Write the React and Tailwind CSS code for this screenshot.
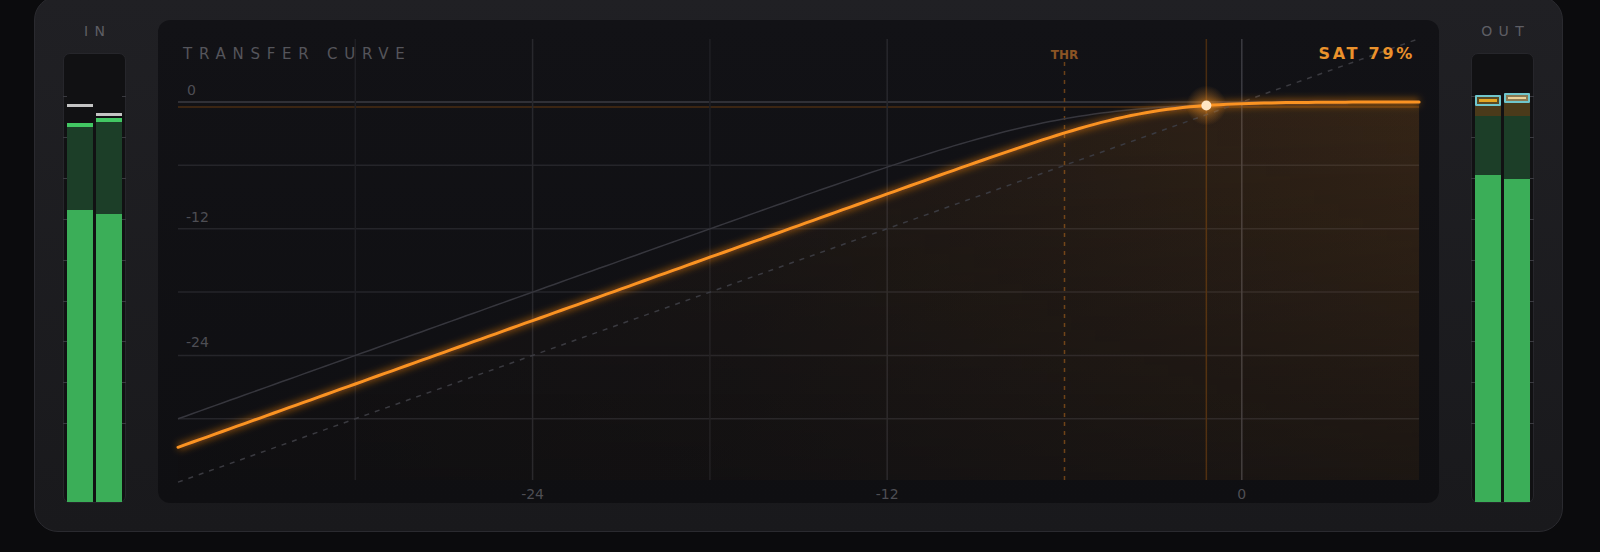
import React from "react";

// plot mapping: input/output in dB, -36..+6 on both axes
const X = (d) => 20 + (d + 36) * 29.55;
const Y = (d) => 82 - d * 10.56;
const soft = (v, k) => -k * Math.log(1 + Math.exp(-v / k));

const curvePath = (gain, k) => {
  let s = "";
  for (let d = -36; d <= 6.001; d += 0.25) {
    const out = soft(d + gain, k);
    s += `${s ? "L" : "M"}${X(d).toFixed(1)},${Y(out).toFixed(1)}`;
  }
  return s;
};

const SAT = { gain: 3.3, knee: 1.5 };
const KNEE_IN = -1.2;

const TICKS = [42, 83, 124, 165, 206, 247, 287, 328, 369];

const Meter = ({ bars }) => (
  <div className="relative flex h-full w-[63px] gap-[3px] rounded-[7px] border border-[#26262b] bg-[#111113] px-[3px]">
    {TICKS.map((t) => (
      <React.Fragment key={t}>
        <div className="absolute left-[-1px] h-px w-[4px] bg-[#3a3a40]" style={{ top: t }} />
        <div className="absolute right-[-1px] h-px w-[4px] bg-[#3a3a40]" style={{ top: t }} />
      </React.Fragment>
    ))}
    {bars.map((segs, i) => (
      <div key={i} className="flex w-[26px] flex-col justify-end">
        {segs}
      </div>
    ))}
  </div>
);

const inBars = [
  <>
    <div className="h-[3px] bg-[#c4c4c4]" />
    <div className="h-[16px]" />
    <div className="h-[4px] bg-[#42c763]" />
    <div className="h-[83px] bg-[#1c3e28]" />
    <div className="h-[292px] bg-[#3bae58]" />
  </>,
  <>
    <div className="h-[3px] bg-[#c4c4c4]" />
    <div className="h-[2px]" />
    <div className="h-[4px] bg-[#42c763]" />
    <div className="h-[92px] bg-[#1c3e28]" />
    <div className="h-[288px] bg-[#3bae58]" />
  </>,
];

const outBars = [
  <>
    <div className="flex h-[11px] items-center rounded-[1px] border-2 border-[#6fc6cc] bg-[#5a4a22] px-[2px]">
      <div className="h-[3px] w-full bg-[#e2a624]" />
    </div>
    <div className="h-[10px] bg-[#4a3a1a]" />
    <div className="h-[59px] bg-[#1c3e28]" />
    <div className="h-[327px] bg-[#3bae58]" />
  </>,
  <>
    <div className="flex h-[10px] items-center rounded-[1px] border-2 border-[#6fc6cc] bg-[#8a7a52] px-[2px]">
      <div className="h-[2px] w-full bg-[#ead29a]" />
    </div>
    <div className="h-[13px] bg-[#4a3a1a]" />
    <div className="h-[63px] bg-[#1c3e28]" />
    <div className="h-[323px] bg-[#3bae58]" />
  </>,
];

const MeterColumn = ({ label, bars }) => (
  <div className="flex flex-col items-center">
    <div className="mb-[11px] h-[22px] pl-[0.45em] text-[14px] leading-[22px] tracking-[0.45em] text-[#5e5e64] [font-family:'DejaVu_Sans',sans-serif]">
      {label}
    </div>
    <div className="flex-1">
      <Meter bars={bars} />
    </div>
  </div>
);

const TransferCurve = () => {
  const orange = curvePath(SAT.gain, SAT.knee);
  const clean = curvePath(6, 2.3);
  const fill = `${orange}L${X(6)},460L${X(-36)},460Z`;
  const kx = X(KNEE_IN);
  const ky = Y(soft(KNEE_IN + SAT.gain, SAT.knee));
  const grid = [-30, -24, -18, -12];
  const rows = [-6, -12, -18, -24, -30];

  return (
    <div className="relative flex-1 overflow-hidden rounded-[12px] bg-gradient-to-b from-[#121216] to-[#0f0f12]">
      <svg className="absolute inset-0" width="1281" height="483" viewBox="0 0 1281 483">
        <defs>
          <linearGradient id="satFill" x1="0" y1="0" x2="1" y2="0">
            <stop offset="0%" stopColor="#f08a1c" stopOpacity="0.01" />
            <stop offset="45%" stopColor="#f08a1c" stopOpacity="0.05" />
            <stop offset="100%" stopColor="#f08a1c" stopOpacity="0.16" />
          </linearGradient>
          <linearGradient id="fade" x1="0" y1="0" x2="0" y2="1">
            <stop offset="0%" stopColor="#fff" stopOpacity="1" />
            <stop offset="100%" stopColor="#fff" stopOpacity="0.35" />
          </linearGradient>
          <mask id="fillMask" maskUnits="userSpaceOnUse" x="0" y="0" width="1281" height="483">
            <rect x="0" y="82" width="1281" height="380" fill="url(#fade)" />
          </mask>
          <radialGradient id="dotGlow">
            <stop offset="0%" stopColor="#ff9a2a" stopOpacity="0.55" />
            <stop offset="100%" stopColor="#ff9a2a" stopOpacity="0" />
          </radialGradient>
          <filter id="glow" x="-10%" y="-10%" width="120%" height="120%">
            <feGaussianBlur stdDeviation="3.5" />
          </filter>
        </defs>

        {/* grid */}
        {rows.map((d) => (
          <line key={d} x1={X(-36)} x2={X(6)} y1={Y(d)} y2={Y(d)} stroke="#25252a" strokeWidth="1.5" />
        ))}
        <line x1={X(-36)} x2={X(6)} y1={Y(0)} y2={Y(0)} stroke="#303036" strokeWidth="2" />
        <line x1={X(-36)} x2={X(6)} y1={87} y2={87} stroke="#4a2d12" strokeWidth="1.5" />
        {grid.map((d) => (
          <line key={d} x1={X(d)} x2={X(d)} y1={19} y2={460} stroke={d % 12 === 0 ? "#28282d" : "#1f1f24"} strokeWidth="1.5" />
        ))}
        <line x1={X(0)} x2={X(0)} y1={19} y2={460} stroke="#3c3c42" strokeWidth="1.5" />
        <line x1={X(-6)} x2={X(-6)} y1={42} y2={460} stroke="#6a4018" strokeWidth="1.5" strokeDasharray="4 5" />
        <line x1={kx} x2={kx} y1={19} y2={460} stroke="#4a2c10" strokeWidth="1.5" />

        {/* axis labels */}
        <g fill="#4e4e54" fontSize="14" fontFamily="'DejaVu Sans', sans-serif">
          <text x="29" y={Y(0) - 7}>0</text>
          <text x="28" y={Y(-12) - 7}>-12</text>
          <text x="28" y={Y(-24) - 8}>-24</text>
          <text x={X(-24)} y="479" textAnchor="middle">-24</text>
          <text x={X(-12)} y="479" textAnchor="middle">-12</text>
          <text x={X(0)} y="479" textAnchor="middle">0</text>
        </g>
        <text x={X(-6)} y="39" textAnchor="middle" fill="#8a5424" fontSize="12" fontWeight="bold" fontFamily="'DejaVu Sans', sans-serif">
          THR
        </text>

        {/* curves */}
        <path d={fill} fill="url(#satFill)" mask="url(#fillMask)" />
        <line x1={X(-36)} y1={Y(-36)} x2={X(6)} y2={Y(6)} stroke="#3a3a40" strokeWidth="1.5" strokeDasharray="5 6" />
        <path d={clean} fill="none" stroke="#36363d" strokeWidth="1.5" />
        <path d={orange} fill="none" stroke="#ff8a14" strokeWidth="7" strokeOpacity="0.45" filter="url(#glow)" />
        <path d={orange} fill="none" stroke="#fb9322" strokeWidth="3" strokeLinecap="round" />

        <circle cx={kx} cy={ky} r="20" fill="url(#dotGlow)" />
        <circle cx={kx} cy={ky} r="5" fill="#ffe6c4" />
      </svg>

      <div className="relative flex items-center justify-between pl-[25px] pr-[24px] pt-[22px]">
        <span className="text-[15px] tracking-[0.45em] text-[#55555b] [font-family:'DejaVu_Sans',sans-serif]">
          TRANSFER CURVE
        </span>
        <span className="text-[16px] font-semibold tracking-[0.17em] text-[#eb922c] [font-family:'DejaVu_Sans',sans-serif]">
          SAT 79%
        </span>
      </div>
    </div>
  );
};

export default function App() {
  return (
    <div className="h-[552px] w-full overflow-hidden bg-[#0b0b0d]">
      <div className="ml-[34px] mr-[37px] mt-[-4px] flex h-[536px] gap-[32px] rounded-[24px] border border-[#2a2a2f] bg-gradient-to-b from-[#202024] to-[#19191c] pb-[28px] pl-[28px] pr-[28px] pt-[23px]">
        <MeterColumn label="IN" bars={inBars} />
        <TransferCurve />
        <MeterColumn label="OUT" bars={outBars} />
      </div>
    </div>
  );
}
